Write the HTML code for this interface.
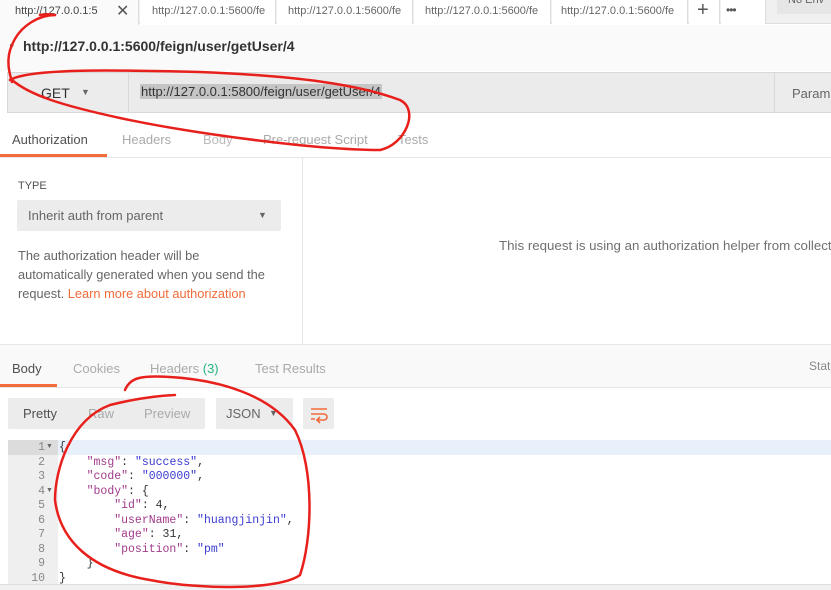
<!DOCTYPE html>
<html><head><meta charset="utf-8"><style>
*{margin:0;padding:0;box-sizing:border-box}
body{width:831px;height:590px;overflow:hidden;background:#fff;font-family:"Liberation Sans",sans-serif;font-size:13px;color:#505050;position:relative}
.a{position:absolute;white-space:nowrap}
.mono{font-family:"Liberation Mono",monospace;font-size:11.5px}
.t{position:absolute;top:0;height:24px;background:#fff;border-right:1px solid #ddd}
.tt{position:absolute;top:5px;font-size:11px;color:#666;overflow:hidden}
</style></head><body>
<!-- tab bar -->
<div class="a" style="left:0;top:0;width:831px;height:24px;background:#f0f0f0;border-bottom:1px solid #ddd"></div>
<div class="t" style="left:0;width:139px;height:25px;background:#fafafa"></div>
<div class="tt" style="left:15px;width:100px;color:#444">http://127.0.0.1:5</div>
<div class="a" style="left:116px;top:1px;font-size:16px;color:#555">✕</div>
<div class="t" style="left:140px;width:136px"></div>
<div class="tt" style="left:152px;width:121px">http://127.0.0.1:5600/fe</div>
<div class="t" style="left:277px;width:136px"></div>
<div class="tt" style="left:288px;width:121px">http://127.0.0.1:5600/fe</div>
<div class="t" style="left:414px;width:137px"></div>
<div class="tt" style="left:425px;width:121px">http://127.0.0.1:5600/fe</div>
<div class="t" style="left:552px;width:136px"></div>
<div class="tt" style="left:561px;width:123px">http://127.0.0.1:5600/fe</div>
<div class="t" style="left:689px;width:31px"></div>
<div class="a" style="left:697px;top:-1px;font-size:20px;color:#555">+</div>
<div class="t" style="left:721px;width:45px"></div>
<div class="a" style="left:726px;top:3px;font-size:12px;color:#555;letter-spacing:-1px">•••</div>
<div class="a" style="left:777px;top:0;width:60px;height:14px;background:#e6e6e6"></div>
<div class="a" style="left:788px;top:-6px;font-size:11px;color:#666">No Env</div>
<!-- header -->
<div class="a" style="left:0;top:25px;width:831px;height:46px;background:#fafafa"></div>
<div class="a" style="left:10px;top:41px;font-size:8px;color:#666">▸</div>
<div class="a" style="left:23px;top:38px;font-size:14px;font-weight:bold;color:#333">http://127.0.0.1:5600/feign/user/getUser/4</div>
<!-- request bar -->
<div class="a" style="left:7px;top:72px;width:830px;height:41px;background:#ececec;border:1px solid #d8d8d8"></div>
<div class="a" style="left:41px;top:85px;font-size:14px;color:#333">GET</div>
<div class="a" style="left:81px;top:87px;font-size:9px;color:#666">▼</div>
<div class="a" style="left:128px;top:73px;width:647px;height:39px;background:#ebebeb;border-left:1px solid #d8d8d8;border-right:1px solid #d8d8d8"></div>
<div class="a" style="left:140px;top:84px;font-size:13px;color:#333;background:#c5c5c5;padding:0 1px">http://127.0.0.1:5800/feign/user/getUser/4</div>
<div class="a" style="left:792px;top:86px;font-size:13px;color:#666">Param</div>
<!-- req tabs -->
<div class="a" style="left:12px;top:132px;font-size:13px;color:#505050">Authorization</div>
<div class="a" style="left:122px;top:132px;font-size:13px;color:#aaa">Headers</div>
<div class="a" style="left:203px;top:132px;font-size:13px;color:#bbb">Body</div>
<div class="a" style="left:263px;top:132px;font-size:13px;color:#aaa">Pre-request Script</div>
<div class="a" style="left:398px;top:132px;font-size:13px;color:#aaa">Tests</div>
<div class="a" style="left:0;top:154px;width:107px;height:3px;background:#f26b3a"></div>
<div class="a" style="left:0;top:157px;width:831px;height:1px;background:#e6e6e6"></div>
<div class="a" style="left:302px;top:157px;width:1px;height:188px;background:#e6e6e6"></div>
<div class="a" style="left:18px;top:180px;font-size:11px;color:#505050">TYPE</div>
<div class="a" style="left:17px;top:200px;width:264px;height:31px;background:#ececec;border-radius:2px"></div>
<div class="a" style="left:28px;top:208px;font-size:13px;color:#666">Inherit auth from parent</div>
<div class="a" style="left:258px;top:210px;font-size:9px;color:#666">▼</div>
<div class="a" style="left:18px;top:246px;font-size:12.8px;color:#666;line-height:19px;white-space:normal;width:258px">The authorization header will be automatically generated when you send the request. <span style="color:#f26b3a">Learn more about authorization</span></div>
<div class="a" style="left:499px;top:238px;font-size:13.3px;color:#707070">This request is using an authorization helper from collecti</div>
<!-- response -->
<div class="a" style="left:0;top:344px;width:831px;height:44px;background:#f9f9f9;border-top:1px solid #e6e6e6;border-bottom:1px solid #e6e6e6"></div>
<div class="a" style="left:12px;top:361px;font-size:13px;color:#505050">Body</div>
<div class="a" style="left:73px;top:361px;font-size:13px;color:#aaa">Cookies</div>
<div class="a" style="left:150px;top:361px;font-size:13px;color:#aaa">Headers <span style="color:#26b47f">(3)</span></div>
<div class="a" style="left:255px;top:361px;font-size:13px;color:#aaa">Test Results</div>
<div class="a" style="left:809px;top:359px;font-size:12px;color:#888">Stat</div>
<div class="a" style="left:0;top:384px;width:57px;height:3px;background:#f26b3a"></div>
<div class="a" style="left:8px;top:398px;width:197px;height:31px;background:#ececec;border-radius:2px"></div>
<div class="a" style="left:23px;top:406px;font-size:13px;color:#505050">Pretty</div>
<div class="a" style="left:88px;top:406px;font-size:13px;color:#aaa">Raw</div>
<div class="a" style="left:144px;top:406px;font-size:13px;color:#aaa">Preview</div>
<div class="a" style="left:216px;top:398px;width:77px;height:31px;background:#ececec;border-radius:2px"></div>
<div class="a" style="left:226px;top:406px;font-size:13px;color:#666">JSON</div>
<div class="a" style="left:269px;top:408px;font-size:9px;color:#666">▼</div>
<div class="a" style="left:303px;top:398px;width:31px;height:31px;background:#ececec;border-radius:2px"></div>
<svg class="a" style="left:308px;top:404px" width="22" height="20"><path d="M3 5h16M3 10h13a3 3 0 0 1 0 6h-6M3 15h4M12 13l-3 3 3 3" stroke="#f26b3a" stroke-width="1.6" fill="none"/></svg>
<!-- code -->
<div class="a" style="left:8px;top:440px;width:823px;height:146px;background:#fff;border-top:1px solid #e6e6e6"></div>
<div class="a" style="left:8px;top:440px;width:50px;height:146px;background:#efefef"></div>
<div class="a" style="left:58px;top:440px;width:773px;height:15px;background:#e8f0fb"></div>
<div class="a" style="left:8px;top:440px;width:50px;height:15px;background:#dcdcdc"></div>
<div class="a mono" style="left:8px;top:441px;width:37px;text-align:right;color:#888;line-height:14.5px;white-space:pre">1
2
3
4
5
6
7
8
9
10</div>
<div class="a" style="left:46px;top:443px;font-size:7px;color:#666">▼</div>
<div class="a" style="left:46px;top:487px;font-size:7px;color:#666">▼</div>
<div class="a mono" style="left:59px;top:441px;color:#333;line-height:14.5px;white-space:pre">{
    <span style="color:#a03b8b">"msg"</span>: <span style="color:#3a3ad0">"success"</span>,
    <span style="color:#a03b8b">"code"</span>: <span style="color:#3a3ad0">"000000"</span>,
    <span style="color:#a03b8b">"body"</span>: {
        <span style="color:#a03b8b">"id"</span>: 4,
        <span style="color:#a03b8b">"userName"</span>: <span style="color:#3a3ad0">"huangjinjin"</span>,
        <span style="color:#a03b8b">"age"</span>: 31,
        <span style="color:#a03b8b">"position"</span>: <span style="color:#3a3ad0">"pm"</span>
    }
}</div>
<div class="a" style="left:0;top:584px;width:831px;height:6px;background:#f0f0f0;border-top:1px solid #ddd"></div>
<!-- red annotations -->
<svg class="a" style="left:0;top:0" width="831" height="590">
<g stroke="#e8201c" stroke-width="2.5" fill="none" stroke-linecap="round">
<path d="M55 15 C40 15 20 25 12 45 C5 60 10 75 12 82"/>
<path d="M40 15 C45 14 50 14 55 15"/>
<path d="M10 80 C30 68 120 70 200 72 C300 76 360 85 400 100 C420 110 405 145 380 150 C320 150 200 135 120 118 C60 105 30 95 12 80"/>
<path d="M125 390 C130 378 140 375 170 377 C220 380 270 395 295 430 C315 470 312 540 300 575 C280 590 200 590 150 580 C90 570 60 540 55 500 C55 470 70 420 110 405 C130 400 150 396 175 395"/>
</g></svg>
</body></html>
